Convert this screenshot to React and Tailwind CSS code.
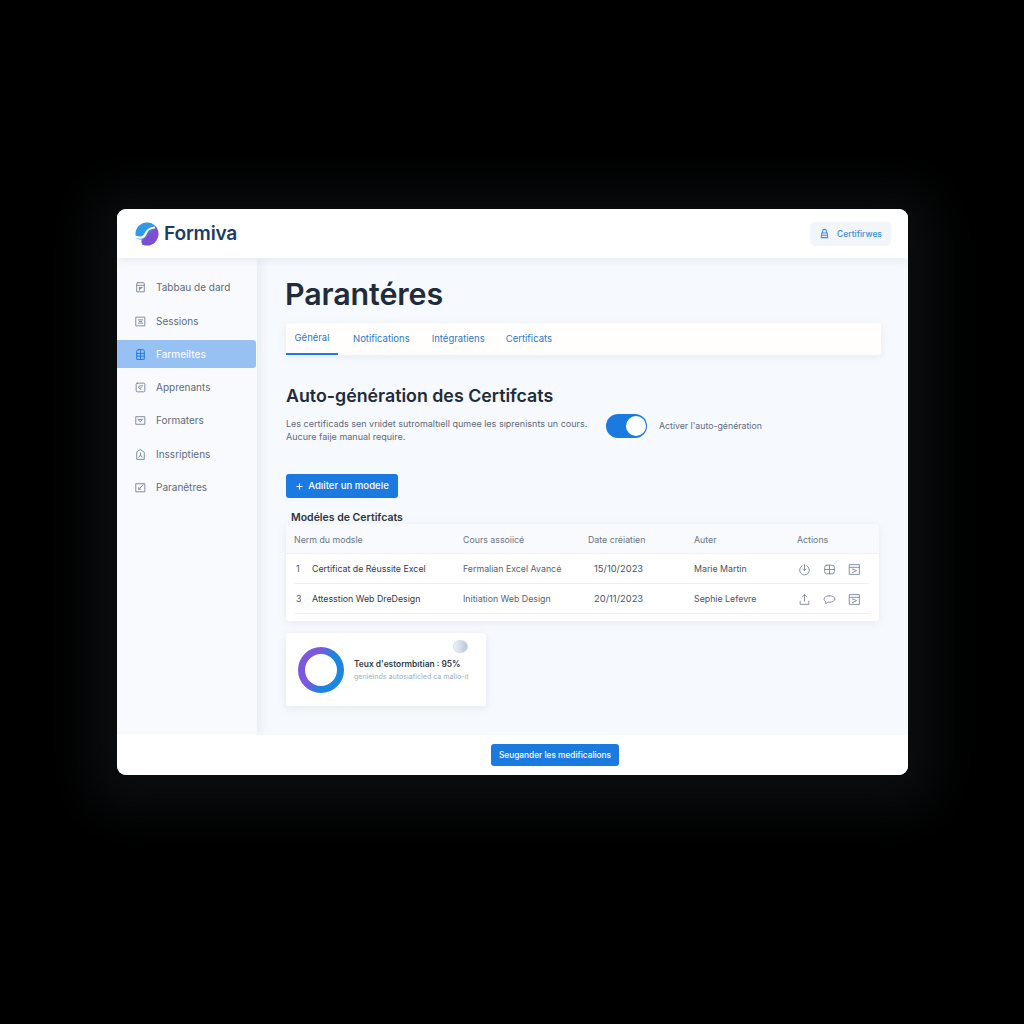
import { Plus } from "lucide-react";

const navItems = [
  { label: "Tabbau de dard", d: "M7 3h10a2 2 0 0 1 2 2v15H5V5a2 2 0 0 1 2-2zM5 8h14M10 12h5M10 12v5M10 14h3" },
  { label: "Sessions", d: "M4 4h16v16H4zM8 9h8M8 15h8M10 12h4" },
  { label: "Farmeiltes", d: "M8 3h8a3 3 0 0 1 3 3v15H5V6a3 3 0 0 1 3-3zM5 10h14M5 15h14M12 3v18", active: true },
  { label: "Apprenants", d: "M6 4h12a2 2 0 0 1 2 2v12a2 2 0 0 1-2 2H6a2 2 0 0 1-2-2V6a2 2 0 0 1 2-2zM16 9h-5a2 2 0 0 0 0 5M11 14l2-2M11 14l2 2" },
  { label: "Formaters", d: "M4 5h16v14H4zM8 10h8l-4 4z" },
  { label: "Inssriptiens", d: "M12 3l7 5v13H5V8zM12 9v4M9 17l3-4 3 4" },
  { label: "Paranêtres", d: "M4 5h16v15H4zM9 15l8-8M9 15h3M9 15v-3" },
];

const rows = [
  {
    id: 1,
    name: "Certificat de Réussite Excel",
    course: "Fermalian Excel Avancé",
    date: "15/10/2023",
    author: "Marie Martin",
    icons: [
      "M8 5a9 9 0 1 0 8 0M12 3v11M9 11l3 3 3-3",
      "M7 4h10a4 4 0 0 1 4 4v8a4 4 0 0 1-4 4H7a4 4 0 0 1-4-4V8a4 4 0 0 1 4-4zM3 12h18M12 4v16",
      "M3 3h18v18H3zM3 8h18M8 11l8 3-8 4",
    ],
  },
  {
    id: 3,
    name: "Attesstion Web DreDesign",
    course: "Initiation Web Design",
    date: "20/11/2023",
    author: "Sephie Lefevre",
    icons: [
      "M12 15V3M8 7l4-4 4 4M4 15v6h16v-6",
      "M12 5c5 0 10 2 10 6s-5 6-10 6c-1 0-2 0-3-.300L5 20v-4c-2-1-3-3-3-5 0-4 5-6 10-6z",
      "M3 3h18v18H3zM3 8h18M8 11l8 3-8 4",
    ],
  },
];

const Icon = ({ d, className }) => (
  <svg viewBox="0 0 24 24" fill="none" stroke="currentColor" strokeWidth="1.700" strokeLinejoin="round" strokeLinecap="round" className={className}>
    <path d={d} />
  </svg>
);

export default function App() {
  return (
    <div className="min-h-screen bg-black pt-[209px] pl-[117px] font-['Inter',sans-serif]">
      <div className="w-[791px] h-[566px] flex flex-col rounded-[9px] overflow-hidden bg-[#f6f9fd] shadow-[0_8px_50px_28px_#0b0d0f]">
        <header className="h-[49px] shrink-0 bg-white flex items-center justify-between pl-[18px] pr-[17px] shadow-[0_2px_10px_rgba(120,140,170,0.14)] z-10">
          <div className="flex items-center gap-[5px]">
            <svg viewBox="0 0 24 24" className="w-[24px] h-[24px]">
              <defs>
                <linearGradient id="logo" x1="0.1" y1="0.1" x2="0.9" y2="0.9">
                  <stop offset="0.42" stopColor="#2f9ae8" />
                  <stop offset="0.6" stopColor="#7d4fd0" />
                </linearGradient>
              </defs>
              <circle cx="12" cy="12" r="11.500" fill="url(#logo)" />
              <path d="M0 14.500c5 2 9 1.500 10.500-2.500S14 6 20 5.500" fill="none" stroke="#fff" strokeWidth="2.200" />
              <path d="M0 16.500c4 1 6 1 7 1-1 2-1 3 .500 4.500H3z" fill="#fff" />
            </svg>
            <span className="pt-[1px] text-[19.200px] leading-none font-semibold text-[#1f3c68] tracking-[-0.2px]">Formiva</span>
          </div>
          <button className="w-[81px] h-[24px] rounded-[5px] bg-[#f2f6fb] flex items-center justify-center gap-[7px] text-[8.500px] leading-[24px] font-medium text-[#3b8de0]">
            <svg viewBox="0 0 24 24" fill="none" stroke="currentColor" strokeWidth="2.200" className="w-[11px] h-[11px]">
              <path d="M8 11V7a4 4 0 0 1 8 0v4M6 11h12l1 10H5zM5 16h14" />
            </svg>
            Certifirwes
          </button>
        </header>

        <div className="flex-1 flex min-h-0">
          <aside className="w-[140px] shrink-0 bg-[#f8fafd] pt-[10.500px] shadow-[2px_0_10px_rgba(120,140,170,0.14)]">
            {navItems.map((item) => (
              <div
                key={item.label}
                className={`w-[139px] h-[28px] mt-[5.300px] flex items-center gap-[9px] pl-[17px] rounded-r-[3px] text-[10px] ${
                  item.active ? "bg-[#98c1f3] text-[#f2f7ff] font-medium" : "text-[#5f6b7c]"
                }`}
              >
                <Icon d={item.d} className={`w-[13px] h-[13px] ${item.active ? "text-[#1d76e0]" : "text-[#7a8594]"}`} />
                {item.label}
              </div>
            ))}
          </aside>

          <main className="flex-1 pl-[28px] pr-[27px] pt-[18px]">
            <h1 className="text-[30.400px] leading-[36px] font-semibold text-[#222b3a] tracking-[-0.1px]">Parantéres</h1>

            <nav className="mt-[11px] ml-px h-[32px] bg-[#fffefd] rounded-[3px] flex text-[9.500px] text-[#2d78c8] shadow-[0_2px_8px_rgba(120,140,170,0.12)]">
              <span className="w-[52px] pt-[1px] flex items-center justify-center border-b-2 border-[#1b7ae0]">Général</span>
              <span className="ml-[15px] pt-[1px] flex items-center">Notifications</span>
              <span className="ml-[22px] pt-[1px] flex items-center">Intégratiens</span>
              <span className="ml-[21px] pt-[1px] flex items-center">Certificats</span>
            </nav>

            <h2 className="mt-[29px] ml-px text-[17.800px] leading-[24px] font-semibold text-[#222b3a]">Auto-génération des Certifcats</h2>

            <div className="mt-[9px] ml-px flex">
              <p className="w-[320px] text-[9px] leading-[13px] text-[#5f6b7c]">
                Les certificads sen vrıidet sutromaltıell qumee les sıprenisnts un cours.
                <br />
                Aucure faije manual require.
              </p>
              <div className="flex items-center gap-[12px] -mt-[3px] h-[24px]">
                <span className="w-[41px] h-[24px] rounded-full bg-[#1b7ae0] flex items-center justify-end pr-[1px]">
                  <span className="w-[20px] h-[20px] rounded-full bg-white"></span>
                </span>
                <span className="pt-[1px] text-[8.750px] text-[#5f6b7c]">Activer l'auto-génération</span>
              </div>
            </div>

            <button className="mt-[31px] ml-px w-[112px] h-[24px] rounded-[3px] bg-[#1b7ae0] text-white text-[9.600px] font-medium flex items-center justify-center gap-[4px]">
              <Plus className="w-[9px] h-[9px]" strokeWidth={3} />
              Adıiter un modele
            </button>

            <h3 className="mt-[13px] ml-[6px] text-[10.500px] leading-[13px] font-semibold text-[#2b3544]">Modéles de Certifcats</h3>

            <div className="ml-px w-[593px] rounded-[3px] bg-white shadow-[0_2px_8px_rgba(120,140,170,0.12)] text-[8.800px]">
              <div className="h-[30px] pt-[2px] flex items-center bg-[#f8fafd] text-[#6b7585] border-b border-[#e9f0f8] rounded-t-[3px]">
                <span className="w-[177px] pl-[8px]">Nerm du modsle</span>
                <span className="w-[125px]">Cours assoiicé</span>
                <span className="w-[106px]">Date créiatien</span>
                <span className="w-[103px]">Auter</span>
                <span>Actions</span>
              </div>
              <div className="pl-[9px] pr-[10px] pb-[7px]">
                {rows.map((row) => (
                  <div key={row.id} className="h-[30px] pt-[1px] flex items-center border-b border-[#e9f0f8] text-[#4c5564]">
                    <span className="w-[17px] pl-[1px]">{row.id}</span>
                    <span className="w-[151px] text-[#333c4a]">{row.name}</span>
                    <span className="w-[131px] text-[#5a6473]">{row.course}</span>
                    <span className="w-[100px] text-[9.400px]">{row.date}</span>
                    <span className="w-[104px]">{row.author}</span>
                    <div className="flex gap-[12px] text-[#7f8a9c]">
                      {row.icons.map((d) => (
                        <Icon key={d} d={d} className="w-[13px] h-[13px]" />
                      ))}
                    </div>
                  </div>
                ))}
              </div>
            </div>

            <div className="relative mt-[12px] ml-px w-[200px] h-[73px] bg-white rounded-[3px] flex items-center pl-[12px] gap-[10px] shadow-[0_2px_8px_rgba(120,140,170,0.14)]">
              <svg viewBox="0 0 46 46" className="w-[46px] h-[46px]">
                <defs>
                  <linearGradient id="ring" x1="0" y1="0.3" x2="1" y2="0.7">
                    <stop offset="0.3" stopColor="#7c58da" />
                    <stop offset="0.65" stopColor="#1b85e0" />
                  </linearGradient>
                </defs>
                <circle cx="23" cy="23" r="19.500" fill="none" stroke="url(#ring)" strokeWidth="7" />
              </svg>
              <div>
                <p className="text-[8.400px] leading-[12px] font-semibold text-[#333c4a]">Teux d'estormbıtian : 95%</p>
                <p className="mt-[1px] text-[7.100px] leading-[11px] text-[#a3acb9]">geniéinds autosıaficled ca malio-ıt</p>
              </div>
              <span className="absolute top-[7px] left-[167px] w-[15px] h-[13px] rounded-full bg-gradient-to-r from-[#eef2f7] to-[#b9c6d8] border border-[#d5dde8]"></span>
            </div>
          </main>
        </div>

        <footer className="h-[40px] shrink-0 bg-white flex items-center pl-[374px] z-10">
          <button className="w-[128px] h-[22px] rounded-[3px] bg-[#1b7ae0] text-white text-[8.300px] font-medium whitespace-nowrap">
            Seugander les medificalions
          </button>
        </footer>
      </div>
    </div>
  );
}
